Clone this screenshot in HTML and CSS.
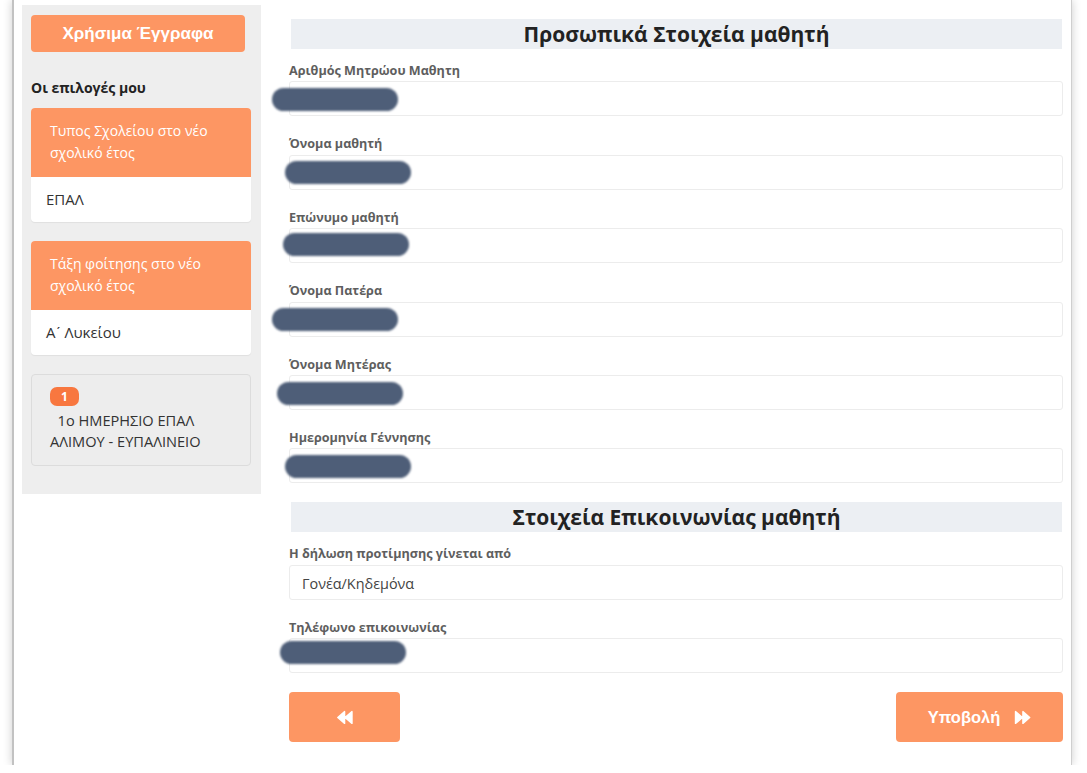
FILE: index.html
```html
<!DOCTYPE html>
<html lang="el">
<head>
    <meta charset="UTF-8">
    <meta name="viewport" content="width=device-width, initial-scale=1.0">
    <title>Δήλωση προτίμησης - Στοιχεία μαθητή</title>
    <link rel="stylesheet" href="styles.css">
</head>
<body>
    <div class="frame">
        <aside class="sidebar">
            <button class="docs-btn">Χρήσιμα Έγγραφα</button>
            <h4 class="my-choices">Οι επιλογές μου</h4>

            <div class="choice-card">
                <div class="choice-head">Τυπος Σχολείου στο νέο σχολικό έτος</div>
                <div class="choice-body">ΕΠΑΛ</div>
            </div>

            <div class="choice-card">
                <div class="choice-head">Τάξη φοίτησης στο νέο σχολικό έτος</div>
                <div class="choice-body">Α&#x0374; Λυκείου</div>
            </div>

            <div class="school-box">
                <span class="badge">1</span>
                <div class="school-name">&nbsp; 1ο ΗΜΕΡΗΣΙΟ ΕΠΑΛ<br>ΑΛΙΜΟΥ - ΕΥΠΑΛΙΝΕΙΟ</div>
            </div>
        </aside>

        <main class="content">
            <h2 class="section-title">Προσωπικά Στοιχεία μαθητή</h2>

            <div class="form-group">
                <label>Αριθμός Μητρώου Μαθητη</label>
                <div class="field"><span class="redact r1"></span></div>
            </div>
            <div class="form-group">
                <label>Όνομα μαθητή</label>
                <div class="field"><span class="redact r2"></span></div>
            </div>
            <div class="form-group">
                <label>Επώνυμο μαθητή</label>
                <div class="field"><span class="redact r3"></span></div>
            </div>
            <div class="form-group">
                <label>Όνομα Πατέρα</label>
                <div class="field"><span class="redact r4"></span></div>
            </div>
            <div class="form-group">
                <label>Όνομα Μητέρας</label>
                <div class="field"><span class="redact r5"></span></div>
            </div>
            <div class="form-group">
                <label>Ημερομηνία Γέννησης</label>
                <div class="field"><span class="redact r6"></span></div>
            </div>

            <h2 class="section-title">Στοιχεία Επικοινωνίας μαθητή</h2>

            <div class="form-group">
                <label>Η δήλωση προτίμησης γίνεται από</label>
                <div class="field">Γονέα/Κηδεμόνα</div>
            </div>
            <div class="form-group">
                <label>Τηλέφωνο επικοινωνίας</label>
                <div class="field"><span class="redact r7"></span></div>
            </div>

            <div class="actions">
                <button class="nav-btn back-btn" title="Πίσω">
                    <svg width="16" height="15" viewBox="0 0 16 15"><path d="M0.8 7.5 L7.6 1.6 L7.6 13.4 Z M8 7.5 L15 1.6 L15 13.4 Z" fill="#fff" stroke="#fff" stroke-width="1.4" stroke-linejoin="round"/></svg>
                </button>
                <button class="nav-btn submit-btn">
                    Υποβολή
                    <svg width="17" height="15" viewBox="0 0 16 15"><path d="M15.2 7.5 L8.4 1.6 L8.4 13.4 Z M8 7.5 L1 1.6 L1 13.4 Z" fill="#fff" stroke="#fff" stroke-width="1.4" stroke-linejoin="round"/></svg>
                </button>
            </div>
        </main>
    </div>
</body>
</html>
```

FILE: styles.css
```css
body {
    margin: 0;
    padding: 0;
    background-color: #fff;
    font-family: "Open Sans", Arial, sans-serif;
    color: #333;
}
.frame {
    margin-left: 12px;
    width: 1060px;
    height: 765px;
    box-sizing: border-box;
    border-left: 2px solid #c2c2c2;
    border-right: 1px solid #cfcfcf;
    box-shadow: 0 0 9px rgba(0, 0, 0, 0.2);
    display: flex;
    align-items: flex-start;
    padding-left: 8px;
    background-color: #fff;
}
.sidebar {
    width: 239px;
    margin-top: 5px;
    padding: 10px 10px 28px 9px;
    box-sizing: border-box;
    background-color: #eeeeee;
}
.docs-btn {
    display: block;
    width: 214px;
    height: 37px;
    border: none;
    border-radius: 4px;
    background-color: #fd9663;
    color: #fff;
    font-family: "Liberation Sans", Arial, sans-serif;
    font-size: 17px;
    font-weight: bold;
    cursor: pointer;
}
.my-choices {
    margin: 26px 0 11px 0;
    font-size: 14px;
    line-height: 19px;
    font-weight: bold;
    color: #222;
}
.choice-card {
    background-color: #fff;
    border-radius: 4px;
    margin-bottom: 19px;
    overflow: hidden;
    box-shadow: 0 1px 1px rgba(0, 0, 0, 0.06);
}
.choice-head {
    background-color: #fd9663;
    color: #fff;
    font-size: 14px;
    line-height: 22px;
    padding: 12px 19px 13px 19px;
}
.choice-body {
    font-size: 15px;
    line-height: 21px;
    padding: 12px 15px;
    color: #333;
}
.school-box {
    border: 1px solid #dcdcdc;
    border-radius: 4px;
    background-color: #ededed;
    padding: 12px 18px 13px 18px;
}
.badge {
    display: block;
    width: fit-content;
    height: 19px;
    line-height: 19px;
    padding: 0 11px;
    border-radius: 7px;
    background-color: #f8773f;
    color: #fff;
    font-size: 12px;
    font-weight: bold;
}
.school-name {
    margin-top: 4px;
    font-size: 14.6px;
    line-height: 21px;
    color: #333;
}
.content {
    width: 774px;
    margin-left: 28px;
    padding-top: 19px;
}
.section-title {
    margin: 0 1px 13px 2px;
    height: 30px;
    line-height: 30px;
    background-color: #eceff3;
    text-align: center;
    font-size: 21px;
    font-weight: bold;
    color: #222;
}
.form-group {
    margin-bottom: 19px;
}
.form-group label {
    display: block;
    font-size: 12.6px;
    line-height: 18px;
    font-weight: bold;
    color: #5e5e5e;
    margin-bottom: 1.4px;
}
.field {
    position: relative;
    height: 35px;
    box-sizing: border-box;
    border: 1px solid #ececec;
    border-radius: 3px;
    padding: 0 12px;
    line-height: 35px;
    font-size: 14.4px;
    color: #444;
}
.redact {
    position: absolute;
    width: 126px;
    height: 23px;
    border-radius: 12px;
    background-color: #4e5e78;
    filter: blur(1.3px);
}
.r1 { left: -18px; top: 6px; }
.r2 { left: -5px; top: 5px; }
.r3 { left: -7px; top: 4px; }
.r4 { left: -18px; top: 5px; }
.r5 { left: -13px; top: 6px; }
.r6 { left: -5px; top: 6px; }
.r7 { left: -10px; top: 2px; }
.actions {
    display: flex;
    justify-content: space-between;
}
.nav-btn {
    height: 50px;
    border: none;
    border-radius: 4px;
    background-color: #fd9663;
    color: #fff;
    font-family: "Liberation Sans", Arial, sans-serif;
    font-size: 16.5px;
    font-weight: bold;
    cursor: pointer;
    display: flex;
    align-items: center;
    justify-content: center;
    gap: 14px;
}
.back-btn {
    width: 111px;
}
.submit-btn {
    width: 167px;
}
```
